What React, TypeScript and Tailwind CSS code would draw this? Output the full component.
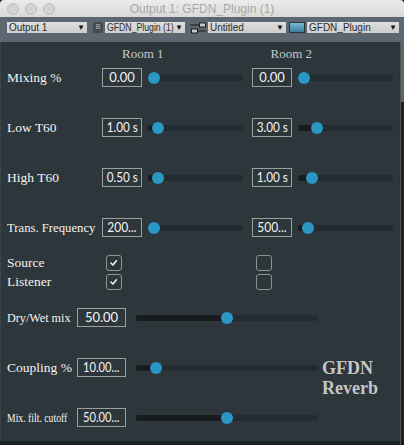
import React from "react";

const serif = "font-['Liberation_Serif',serif]";
const sans = "font-['Liberation_Sans',Arial,sans-serif]";
const lato = "font-['Lato',sans-serif]";

function Dropdown({ label, className, labelClass = "" }: { label: string; className: string; labelClass?: string }) {
  return (
    <div
      className={`flex h-[11px] items-center justify-between gap-[1px] whitespace-nowrap bg-gradient-to-b from-[#dedede] to-[#cdcdcd] pl-[2px] pr-[2px] text-[10px] leading-none text-[#2b2b2b] ${sans} ${className}`}
    >
      <span className="min-w-0 flex-1">
        <span className={`inline-block origin-left ${labelClass}`}>{label}</span>
      </span>
      <span className="shrink-0 text-[8px] text-[#111]">▼</span>
    </div>
  );
}

function ValueBox({ text, className, squash = "" }: { text: string; className: string; squash?: string }) {
  return (
    <div
      className={`flex h-full items-center justify-center border border-[#9a9fa1] text-[13px] leading-none text-[#f3f3f3] ${lato} ${className}`}
    >
      <span className={`inline-block whitespace-nowrap ${squash}`}>{text}</span>
    </div>
  );
}

function Slider({ pos, className }: { pos: number; className: string }) {
  return (
    <div className={`relative h-[6px] rounded-full bg-[#222b2f] ${className}`}>
      <div className="absolute left-0 top-0 h-full rounded-full bg-[#161c1f]" style={{ width: pos }} />
      <div
        className="absolute top-1/2 h-[12px] w-[12px] -translate-x-1/2 -translate-y-1/2 rounded-full bg-[#2a97c5]"
        style={{ left: pos }}
      />
    </div>
  );
}

function Check({ checked, className = "" }: { checked: boolean; className?: string }) {
  return (
    <div className={`h-[16px] w-[16px] rounded-[3px] border border-[#8f9597] ${className}`}>
      {checked && (
        <svg viewBox="0 0 16 16" className="h-full w-full" fill="none" stroke="#f5f5f5" strokeWidth={1.7} strokeLinecap="round" strokeLinejoin="round">
          <polyline points="4.5,8 6.8,10.3 10.8,5.5" />
        </svg>
      )}
    </div>
  );
}

type RoomRow = {
  label: string;
  labelClass?: string;
  v1: string;
  v2: string;
  sq1?: string;
  sq2?: string;
  p1: number;
  p2: number;
};

const rooms: RoomRow[] = [
  { label: "Mixing %", v1: "0.00", v2: "0.00", p1: 6, p2: 6 },
  { label: "Low T60", v1: "1.00 s", v2: "3.00 s", sq1: "scale-x-[0.9]", sq2: "scale-x-[0.9]", p1: 10, p2: 19 },
  { label: "High T60", v1: "0.50 s", v2: "1.00 s", sq1: "scale-x-[0.9]", sq2: "scale-x-[0.9]", p1: 10, p2: 14 },
  {
    label: "Trans. Frequency",
    labelClass: "scale-x-[0.94]",
    v1: "200...",
    v2: "500...",
    sq1: "scale-x-[0.92]",
    sq2: "scale-x-[0.92]",
    p1: 6,
    p2: 10,
  },
];

export default function App() {
  return (
    <div className="flex h-[445px] w-[404px] flex-col overflow-hidden bg-[#1b2024]">
      {/* title bar */}
      <div className="relative flex h-[17px] shrink-0 items-center rounded-t-[4px] bg-gradient-to-b from-[#ececec] to-[#d9d9d9]">
        <div className="flex gap-[6px] pl-[7px]">
          <span className="h-[12px] w-[12px] rounded-full border border-[#bcbcbc] bg-[#d3d3d3]" />
          <span className="h-[12px] w-[12px] rounded-full border border-[#bcbcbc] bg-[#d3d3d3]" />
          <span className="h-[12px] w-[12px] rounded-full border border-[#bcbcbc] bg-[#d3d3d3]" />
        </div>
        <div className={`absolute inset-0 flex items-center justify-center text-[12px] text-[#a9a9a9] ${sans}`}>
          Output 1: GFDN_Plugin (1)
        </div>
      </div>

      {/* toolbar */}
      <div className="flex h-[25px] shrink-0 items-start bg-[#5c6771] pl-[7px] pt-[5px]">
        <Dropdown label="Output 1" className="w-[80px]" />
        <div className={`ml-[6px] flex h-[11px] w-[10px] items-center justify-center rounded-[2px] bg-[#454b50] text-[7px] font-bold text-[#9a9a9a] ${sans}`}>
          B
        </div>
        <Dropdown label="GFDN_Plugin (1)" className="ml-[2px] w-[80px]" labelClass="scale-x-[0.87]" />
        <svg viewBox="0 0 16 12" className="ml-[5px] h-[12px] w-[16px]" fill="none" stroke="#1d1d1d" strokeWidth={1}>
          <line x1="0" y1="3" x2="9" y2="3" />
          <rect x="9.5" y="1" width="6" height="4" fill="#c9c9c9" />
          <line x1="8" y1="9" x2="16" y2="9" />
          <rect x="1.5" y="7" width="6" height="4" fill="#c9c9c9" />
        </svg>
        <Dropdown label="Untitled" className="ml-[2px] w-[78px]" />
        <div className="ml-[3px] h-[11px] w-[16px] border border-[#27343c] bg-gradient-to-b from-[#7bb8d6] to-[#3f7e9e]" />
        <Dropdown label="GFDN_Plugin" className="ml-[2px] w-[92px]" />
      </div>

      <div className="flex min-h-0 flex-1">
        {/* main panel */}
        <div className="flex h-[399px] flex-1 flex-col rounded-b-[3px] border-l border-[#3a454a] bg-[#2c363b] pt-[4px]">
          <div className={`flex h-[16px] items-center text-[13px] text-[#c9c9c9] ${serif}`}>
            <span className="ml-[121px]">Room 1</span>
            <span className="ml-[107px]">Room 2</span>
          </div>

          {rooms.map((r, i) => (
            <div
              key={r.label}
              className={`flex h-[19px] shrink-0 items-center pl-[6px] ${i === 0 ? "mt-[6px]" : "mt-[31px]"}`}
            >
              <div className={`w-[95px] whitespace-nowrap text-[13.5px] leading-none text-[#f4f4f4] ${serif}`}>
                <span className={`inline-block origin-left ${r.labelClass ?? ""}`}>{r.label}</span>
              </div>
              <ValueBox text={r.v1} className="w-[40px]" squash={r.sq1} />
              <Slider pos={r.p1} className="ml-[6px] w-[95px]" />
              <ValueBox text={r.v2} className="ml-[9px] w-[40px]" squash={r.sq2} />
              <Slider pos={r.p2} className="ml-[6px] w-[95px]" />
            </div>
          ))}

          {[
            { label: "Source", c1: true, c2: false, mt: "mt-[18px]" },
            { label: "Listener", c1: true, c2: false, mt: "mt-[3px]" },
          ].map((c) => (
            <div key={c.label} className={`flex h-[16px] shrink-0 items-center pl-[6px] ${c.mt}`}>
              <div className={`w-[99px] text-[13.5px] leading-none text-[#f4f4f4] ${serif}`}>{c.label}</div>
              <Check checked={c.c1} />
              <Check checked={c.c2} className="ml-[134px]" />
            </div>
          ))}

          {/* dry / wet */}
          <div className="mt-[18px] flex h-[19px] shrink-0 items-center pl-[6px]">
            <div className={`w-[70px] whitespace-nowrap text-[13.5px] leading-none text-[#f4f4f4] ${serif}`}>
              <span className="inline-block origin-left scale-x-[0.9]">Dry/Wet mix</span>
            </div>
            <ValueBox text="50.00" className="w-[49px] text-[13.5px]" />
            <Slider pos={91} className="ml-[10px] w-[182px]" />
          </div>

          {/* coupling */}
          <div className="mt-[31px] flex h-[19px] shrink-0 items-start pl-[6px]">
            <div className={`flex h-full w-[70px] items-center whitespace-nowrap text-[13.5px] leading-none text-[#f4f4f4] ${serif}`}>
              Coupling %
            </div>
            <ValueBox text="10.00..." className="w-[49px]" squash="scale-x-[0.86]" />
            <div className="flex h-full items-center">
              <Slider pos={20} className="ml-[10px] w-[182px]" />
            </div>
            <div className={`ml-[4px] text-[18px] font-bold leading-[20px] text-[#c6c6c6] ${serif}`}>
              GFDN
              <br />
              Reverb
            </div>
          </div>

          {/* mix filter cutoff */}
          <div className="mt-[31px] flex h-[19px] shrink-0 items-center pl-[6px]">
            <div className={`w-[70px] whitespace-nowrap text-[13.5px] leading-none text-[#f4f4f4] ${serif}`}>
              <span className="inline-block origin-left scale-x-[0.72]">Mix. filt. cutoff</span>
            </div>
            <ValueBox text="50.00..." className="w-[49px]" squash="scale-x-[0.86]" />
            <Slider pos={91} className="ml-[10px] w-[182px]" />
          </div>
        </div>

        {/* right edge */}
        <div className="flex w-[4px] flex-col border-l border-[#4a5459]">
          <div className="h-[60px] bg-[#5f676c]" />
        </div>
      </div>
    </div>
  );
}
